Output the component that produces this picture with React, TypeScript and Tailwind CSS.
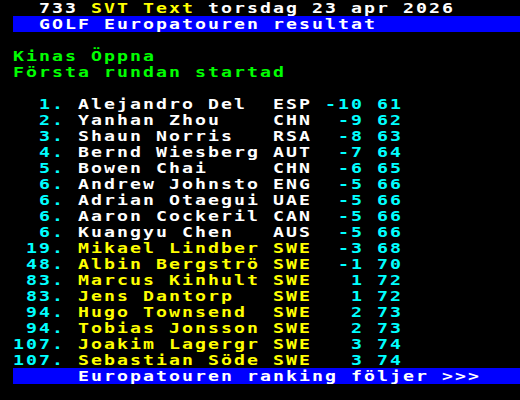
import React from 'react';

type Player = {
  pos: number;
  name: string;
  country: string;
  score: number;
  total: number;
};

const players: Player[] = [
  { pos: 1, name: 'Alejandro Del', country: 'ESP', score: -10, total: 61 },
  { pos: 2, name: 'Yanhan Zhou', country: 'CHN', score: -9, total: 62 },
  { pos: 3, name: 'Shaun Norris', country: 'RSA', score: -8, total: 63 },
  { pos: 4, name: 'Bernd Wiesberg', country: 'AUT', score: -7, total: 64 },
  { pos: 5, name: 'Bowen Chai', country: 'CHN', score: -6, total: 65 },
  { pos: 6, name: 'Andrew Johnsto', country: 'ENG', score: -5, total: 66 },
  { pos: 6, name: 'Adrian Otaegui', country: 'UAE', score: -5, total: 66 },
  { pos: 6, name: 'Aaron Cockeril', country: 'CAN', score: -5, total: 66 },
  { pos: 6, name: 'Kuangyu Chen', country: 'AUS', score: -5, total: 66 },
  { pos: 19, name: 'Mikael Lindber', country: 'SWE', score: -3, total: 68 },
  { pos: 48, name: 'Albin Bergströ', country: 'SWE', score: -1, total: 70 },
  { pos: 83, name: 'Marcus Kinhult', country: 'SWE', score: 1, total: 72 },
  { pos: 83, name: 'Jens Dantorp', country: 'SWE', score: 1, total: 72 },
  { pos: 94, name: 'Hugo Townsend', country: 'SWE', score: 2, total: 73 },
  { pos: 94, name: 'Tobias Jonsson', country: 'SWE', score: 2, total: 73 },
  { pos: 107, name: 'Joakim Lagergr', country: 'SWE', score: 3, total: 74 },
  { pos: 107, name: 'Sebastian Söde', country: 'SWE', score: 3, total: 74 },
];

// one teletext row: 40 cells, 16px tall (cells are 10px wide before the 1.3x stretch)
const Row: React.FC<{ children?: React.ReactNode }> = ({ children }) => (
  <div className="h-4 leading-4 whitespace-pre">{children}</div>
);

const App: React.FC = () => {
  return (
    <div className="w-[520px] h-[400px] bg-black overflow-hidden">
      <div
        className="w-[400px] origin-top-left scale-x-[1.3] text-[14px] font-bold tracking-[1.57px] text-white"
        style={{ fontFamily: '"DejaVu Sans Mono", "Liberation Mono", monospace' }}
      >
        <Row>
          {'   733 '}
          <span className="text-[#ffff00]">SVT Text</span>
          {' torsdag 23 apr 2026'}
        </Row>
        <div className="ml-[10px] h-4 leading-4 whitespace-pre bg-[#0000ff]">{'  GOLF Europatouren resultat'}</div>
        <Row />
        <Row>
          <span className="text-[#00ff00]">{' Kinas Öppna'}</span>
        </Row>
        <Row>
          <span className="text-[#00ff00]">{' Första rundan startad'}</span>
        </Row>
        <Row />
        {players.map((p, i) => {
          const nameColor = p.country === 'SWE' ? 'text-[#ffff00]' : 'text-white';
          return (
            <Row key={i}>
              <span className="text-[#00ffff]">{`${p.pos}.`.padStart(5)}</span>
              {' '}
              <span className={nameColor}>{p.name.padEnd(14)}</span>
              {' '}
              <span className={nameColor}>{p.country}</span>
              {' '}
              <span className="text-[#00ffff]">{`${String(p.score).padStart(3)} ${p.total}`}</span>
            </Row>
          );
        })}
        <div className="ml-[10px] h-4 leading-4 whitespace-pre bg-[#0000ff]">{'     Europatouren ranking följer >>>'}</div>
        <Row />
      </div>
    </div>
  );
};

export default App;
